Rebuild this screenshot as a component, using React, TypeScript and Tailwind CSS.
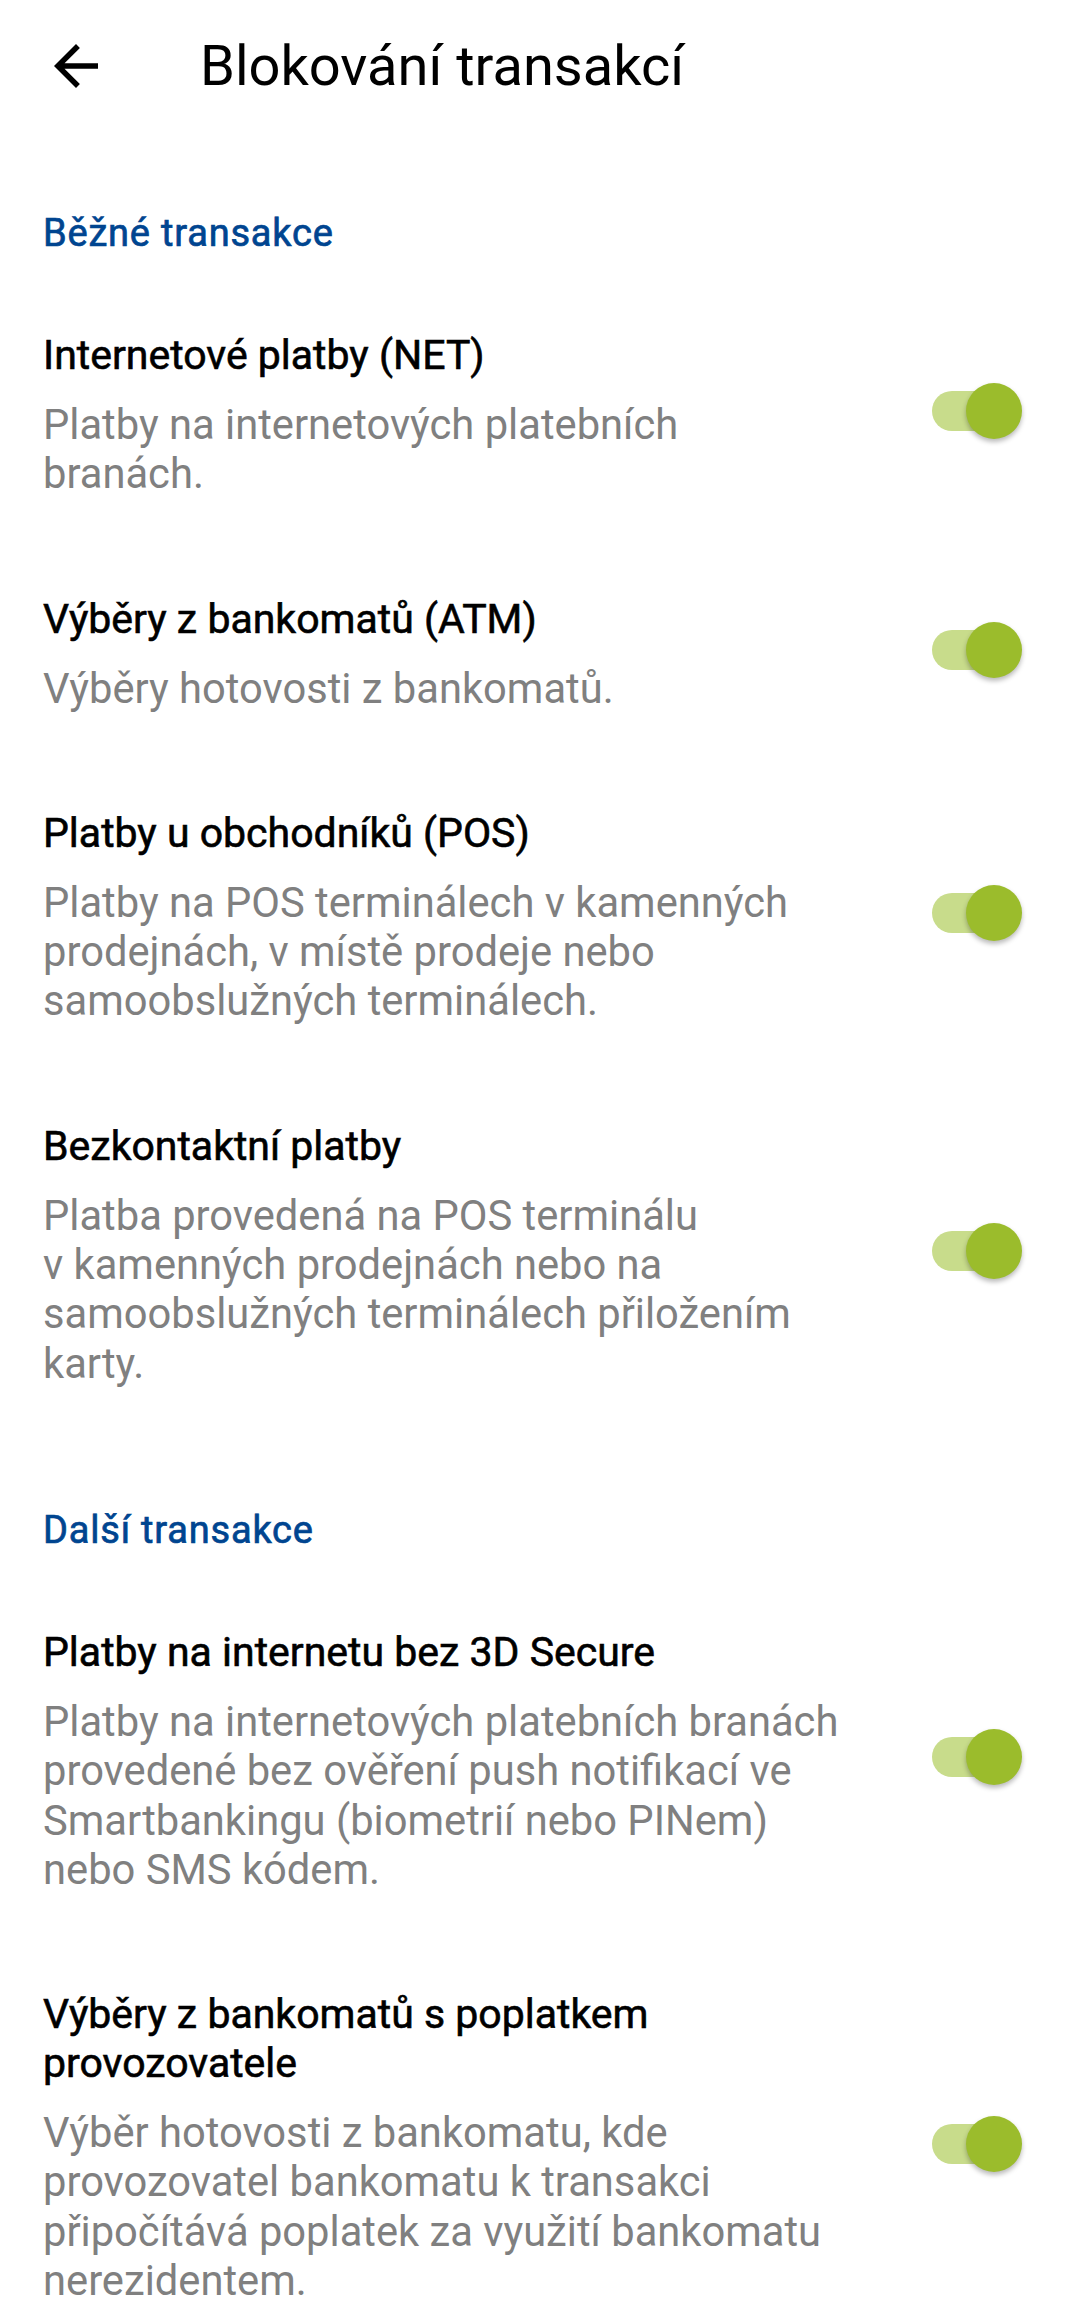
import React from 'react'

type Item = {
  title: string
  desc: string
}

const common: Item[] = [
  {
    title: 'Internetové platby (NET)',
    desc: 'Platby na internetových platebních branách.',
  },
  {
    title: 'Výběry z bankomatů (ATM)',
    desc: 'Výběry hotovosti z bankomatů.',
  },
  {
    title: 'Platby u obchodníků (POS)',
    desc: 'Platby na POS terminálech v\u00a0kamenných prodejnách, v\u00a0místě prodeje nebo samoobslužných terminálech.',
  },
  {
    title: 'Bezkontaktní platby',
    desc: 'Platba provedená na POS terminálu v\u00a0kamenných prodejnách nebo na samoobslužných terminálech přiložením karty.',
  },
]

const other: Item[] = [
  {
    title: 'Platby na internetu bez 3D Secure',
    desc: 'Platby na internetových platebních branách provedené bez ověření push notifikací ve Smartbankingu (biometrií nebo PINem) nebo SMS kódem.',
  },
  {
    title: 'Výběry z bankomatů s poplatkem provozovatele',
    desc: 'Výběr hotovosti z bankomatu, kde provozovatel bankomatu k\u00a0transakci připočítává poplatek za využití bankomatu nerezidentem.',
  },
]

const Toggle: React.FC = () => (
  <div className="relative w-[90px] h-[56px] mb-[8px] shrink-0">
    <div className="absolute left-0 top-[8px] w-[80px] h-[40px] rounded-full bg-[#c8dc8b]" />
    <div className="absolute right-0 top-0 w-[56px] h-[56px] rounded-full bg-[#9bbc2c] shadow-[0_3px_5px_rgba(0,0,0,0.28)]" />
  </div>
)

const SectionHeader: React.FC<{ label: string; className: string }> = ({ label, className }) => (
  <div
    className={`${className} mb-[28px] text-[38px] leading-[43px] tracking-[0.8px] font-normal text-[#004590] [-webkit-text-stroke:0.7px_#004590]`}
  >
    {label}
  </div>
)

const Row: React.FC<{ item: Item }> = ({ item }) => (
  <div className="flex items-center py-[48px] pr-[50px]">
    <div className="w-[806px]">
      <div className="text-[41px] leading-[49px] font-normal text-black [-webkit-text-stroke:0.6px_#000]">
        {item.title}
      </div>
      <div className="mt-[20px] text-[41.7px] leading-[49.3px] text-[#808080]">{item.desc}</div>
    </div>
    <div className="ml-auto">
      <Toggle />
    </div>
  </div>
)

const App: React.FC = () => {
  return (
    <div className="min-h-screen bg-white font-['Roboto',sans-serif]">
      {/* Toolbar */}
      <div className="flex items-center h-[132px] pl-[43px]">
        <svg width="66" height="66" viewBox="0 0 24 24" fill="#000">
          <path d="M20 11H7.83l5.59-5.59L12 4l-8 8 8 8 1.41-1.41L7.83 13H20v-2z" />
        </svg>
        <div className="ml-[91px] text-[56px] leading-[66px] text-black">Blokování transakcí</div>
      </div>

      <div className="pl-[43px]">
        <SectionHeader label="Běžné transakce" className="mt-[80px]" />
        {common.map((item) => (
          <Row key={item.title} item={item} />
        ))}

        <SectionHeader label="Další transakce" className="mt-[73px]" />
        {other.map((item) => (
          <Row key={item.title} item={item} />
        ))}
      </div>
    </div>
  )
}

export default App
